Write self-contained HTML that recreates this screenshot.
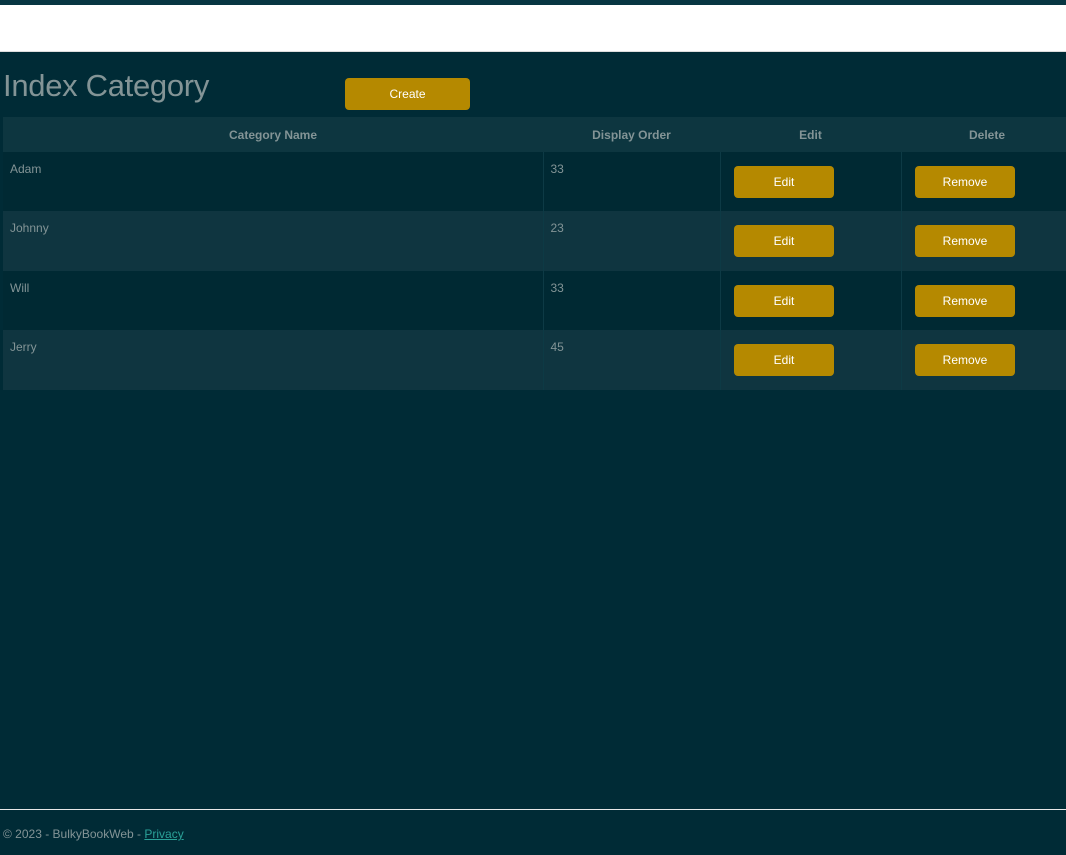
<!DOCTYPE html>
<html><head><meta charset="utf-8"><style>
*{box-sizing:border-box;margin:0;padding:0}
body{width:1066px;height:855px;background:#002b36;font-family:"Liberation Sans",sans-serif;color:#839496;position:relative;overflow:hidden}
.top{position:absolute;top:0;left:0;width:1066px;height:5px;background:#073642}
.nav{position:absolute;top:5px;left:0;width:1066px;height:47px;background:#fff;border-bottom:1px solid #ddd}
h1{position:absolute;left:3px;top:68px;font-weight:normal;font-size:31px;color:#839496;letter-spacing:-0.3px}
.btn{position:absolute;background:#b58900;color:#fff;border-radius:4px;font-size:12px;text-align:center;font-weight:normal}
table{position:absolute;left:3px;top:117px;border-collapse:collapse;width:1070px;font-size:12px}
th{height:35px;background:#0d3640;font-weight:bold;color:#839496;text-align:center}
td{vertical-align:top;padding:10px 7px;position:relative;border-left:1px solid #0d3a45}
td:first-child{border-left:none}
tr.a td{background:#002933}
tr.b td{background:#0f3540}
</style></head><body>
<div class="top"></div><div class="nav"></div>
<h1>Index Category</h1>
<div class="btn" style="left:345px;top:78px;width:125px;height:32px;line-height:32px">Create</div>
<table>
<tr><th style="width:540px">Category Name</th><th style="width:177px">Display Order</th><th style="width:181px">Edit</th><th>Delete</th></tr>
<tr class="a" style="height:59px"><td>Adam</td><td>33</td><td></td><td></td></tr>
<tr class="b" style="height:60px"><td>Johnny</td><td>23</td><td></td><td></td></tr>
<tr class="a" style="height:59px"><td>Will</td><td>33</td><td></td><td></td></tr>
<tr class="b" style="height:60px"><td>Jerry</td><td>45</td><td></td><td></td></tr>
</table>
<div class="btn" style="left:734px;top:166px;width:100px;height:32px;line-height:32px">Edit</div>
<div class="btn" style="left:915px;top:166px;width:100px;height:32px;line-height:32px">Remove</div>
<div class="btn" style="left:734px;top:225px;width:100px;height:32px;line-height:32px">Edit</div>
<div class="btn" style="left:915px;top:225px;width:100px;height:32px;line-height:32px">Remove</div>
<div class="btn" style="left:734px;top:285px;width:100px;height:32px;line-height:32px">Edit</div>
<div class="btn" style="left:915px;top:285px;width:100px;height:32px;line-height:32px">Remove</div>
<div class="btn" style="left:734px;top:344px;width:100px;height:32px;line-height:32px">Edit</div>
<div class="btn" style="left:915px;top:344px;width:100px;height:32px;line-height:32px">Remove</div>
<div style="position:absolute;top:809px;left:0;width:1066px;height:1px;background:#e8e8e8"></div>
<div style="position:absolute;top:827px;left:3px;font-size:12px;color:#839496">© 2023 - BulkyBookWeb - <span style="color:#2aa198;text-decoration:underline">Privacy</span></div>
</body></html>
